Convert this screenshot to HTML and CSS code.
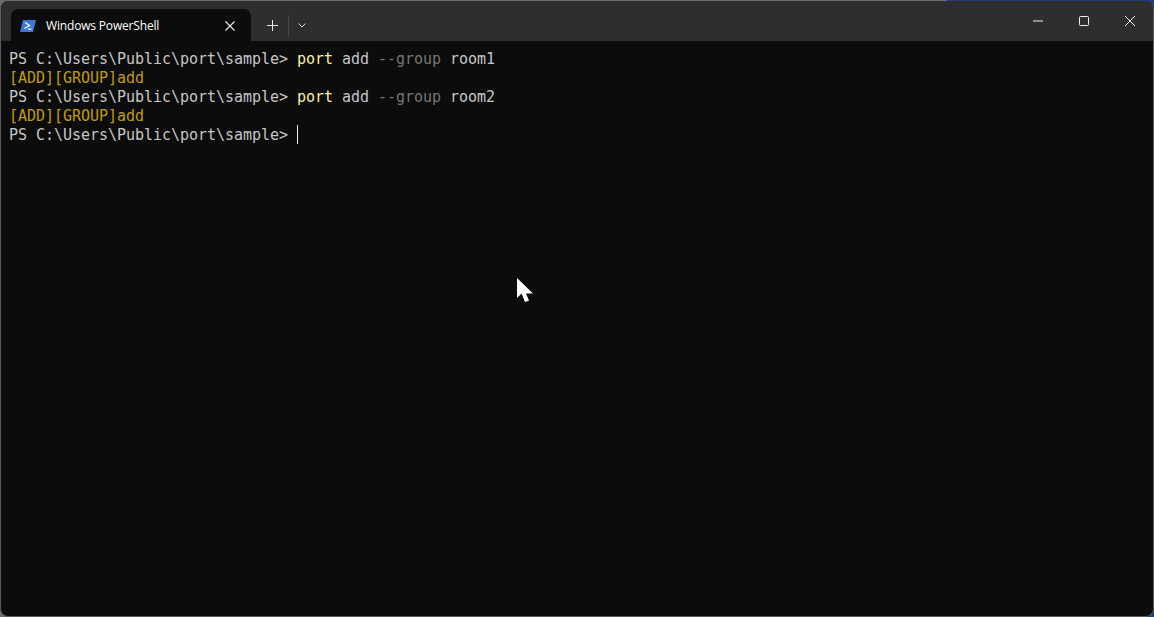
FILE: index.html
```html
<!DOCTYPE html>
<html lang="en">
<head>
<meta charset="utf-8">
<title>Windows PowerShell</title>
<link rel="stylesheet" href="styles.css">
</head>
<body>
<div class="window">
  <header class="titlebar">
    <div class="tab">
      <svg class="ps-icon" width="16" height="16" viewBox="0 0 16 16"><path d="M3 2H16L13 14H0Z" fill="#3b78dc"/><path d="M5 4.500L9.500 7.500L4.500 10.500" fill="none" stroke="#fff" stroke-width="1.3"/><path d="M8 11.200H11.500" stroke="#fff" stroke-width="1.2"/></svg>
      <span class="tab-title">Windows PowerShell</span>
      <svg class="tab-close" width="10" height="10" viewBox="0 0 10 10"><path d="M.5.5L9.500 9.500M9.500.5L.5 9.500" stroke="#f0f0f0" stroke-width="1.1"/></svg>
    </div>
    <div class="tab-actions">
      <svg class="new-tab" width="11" height="11" viewBox="0 0 11 11"><path d="M5.500 0V11M0 5.500H11" stroke="#e8e8e8" stroke-width="1"/></svg>
      <span class="divider"></span>
      <svg class="dropdown" width="8" height="5" viewBox="0 0 8 5"><path d="M.5.5L4 4L7.500.5" fill="none" stroke="#d8d8d8" stroke-width="1"/></svg>
    </div>
    <div class="window-controls">
      <span class="control"><svg width="10" height="10" viewBox="0 0 10 10"><path d="M0 5H10" stroke="#f0f0f0" stroke-width="1"/></svg></span>
      <span class="control"><svg width="10" height="10" viewBox="0 0 10 10"><rect x=".5" y=".5" width="9" height="9" rx="1" fill="none" stroke="#f0f0f0"/></svg></span>
      <span class="control"><svg width="10" height="10" viewBox="0 0 10 10"><path d="M0 0L10 10M10 0L0 10" stroke="#f0f0f0" stroke-width="1"/></svg></span>
    </div>
  </header>
  <main class="terminal">
    <div class="line">PS C:\Users\Public\port\sample&gt; <span class="cmd">port</span> add <span class="param">--group</span> room1</div>
    <div class="line output">[ADD][GROUP]add</div>
    <div class="line">PS C:\Users\Public\port\sample&gt; <span class="cmd">port</span> add <span class="param">--group</span> room2</div>
    <div class="line output">[ADD][GROUP]add</div>
    <div class="line">PS C:\Users\Public\port\sample&gt; <span class="cursor"></span></div>
  </main>
  <svg class="pointer" width="18" height="26" viewBox="0 0 18 26"><path d="M1 1V21L5.500 16.500L9 25L13 23.500L10 16.500H17Z" fill="#fff"/></svg>
</div>
</body>
</html>
```
FILE: styles.css
```css
html, body {
  margin: 0;
  height: 100%;
  overflow: hidden;
}
body {
  box-sizing: border-box;
  padding-top: 1px;
  background: linear-gradient(90deg, #6e6e6e 947px, #1f3f7c 947px);
}
.window {
  position: relative;
  width: 1154px;
  height: 616px;
  box-sizing: border-box;
  border: 1px solid #5c5c5c;
  border-top: 0;
  border-radius: 8px;
  background: #0c0c0c;
  overflow: hidden;
}
.titlebar {
  display: flex;
  align-items: flex-end;
  height: 40px;
  background: #2e2e2e;
  padding-left: 10px;
}
.tab {
  display: flex;
  align-items: center;
  width: 240px;
  height: 32px;
  box-sizing: border-box;
  padding: 1px 16px 0 9px;
  background: #0c0c0c;
  border-radius: 7px 7px 0 0;
  color: #fff;
  font: 12px "Open Sans", "Noto Sans", sans-serif;
  letter-spacing: -0.17px;
}
.ps-icon { flex: none; }
.tab-title { flex: 1; margin-left: 10px; }
.tab-actions {
  display: flex;
  align-items: center;
  height: 31px;
  margin-left: 16px;
}
.divider {
  width: 1px;
  height: 22px;
  margin: 0 9px 0 10px;
  background: #454545;
}
.window-controls {
  display: flex;
  margin-left: auto;
  align-self: flex-start;
}
.control {
  display: flex;
  align-items: center;
  justify-content: center;
  width: 46px;
  height: 40px;
}
.terminal {
  padding-top: 9px;
  padding-left: 8px;
  font: 15px/19px "DejaVu Sans Mono", monospace;
  letter-spacing: -0.03px;
  color: #c6c6c6;
}
.line { height: 19px; white-space: pre; }
.output { color: #c19c00; }
.cmd { color: #f9f1a5; }
.param { color: #767676; }
.cursor {
  display: inline-block;
  width: 1px;
  height: 19px;
  margin-top: -1px;
  background: #f0f0f0;
  vertical-align: top;
}
.pointer {
  position: absolute;
  left: 515px;
  top: 276px;
}
```
